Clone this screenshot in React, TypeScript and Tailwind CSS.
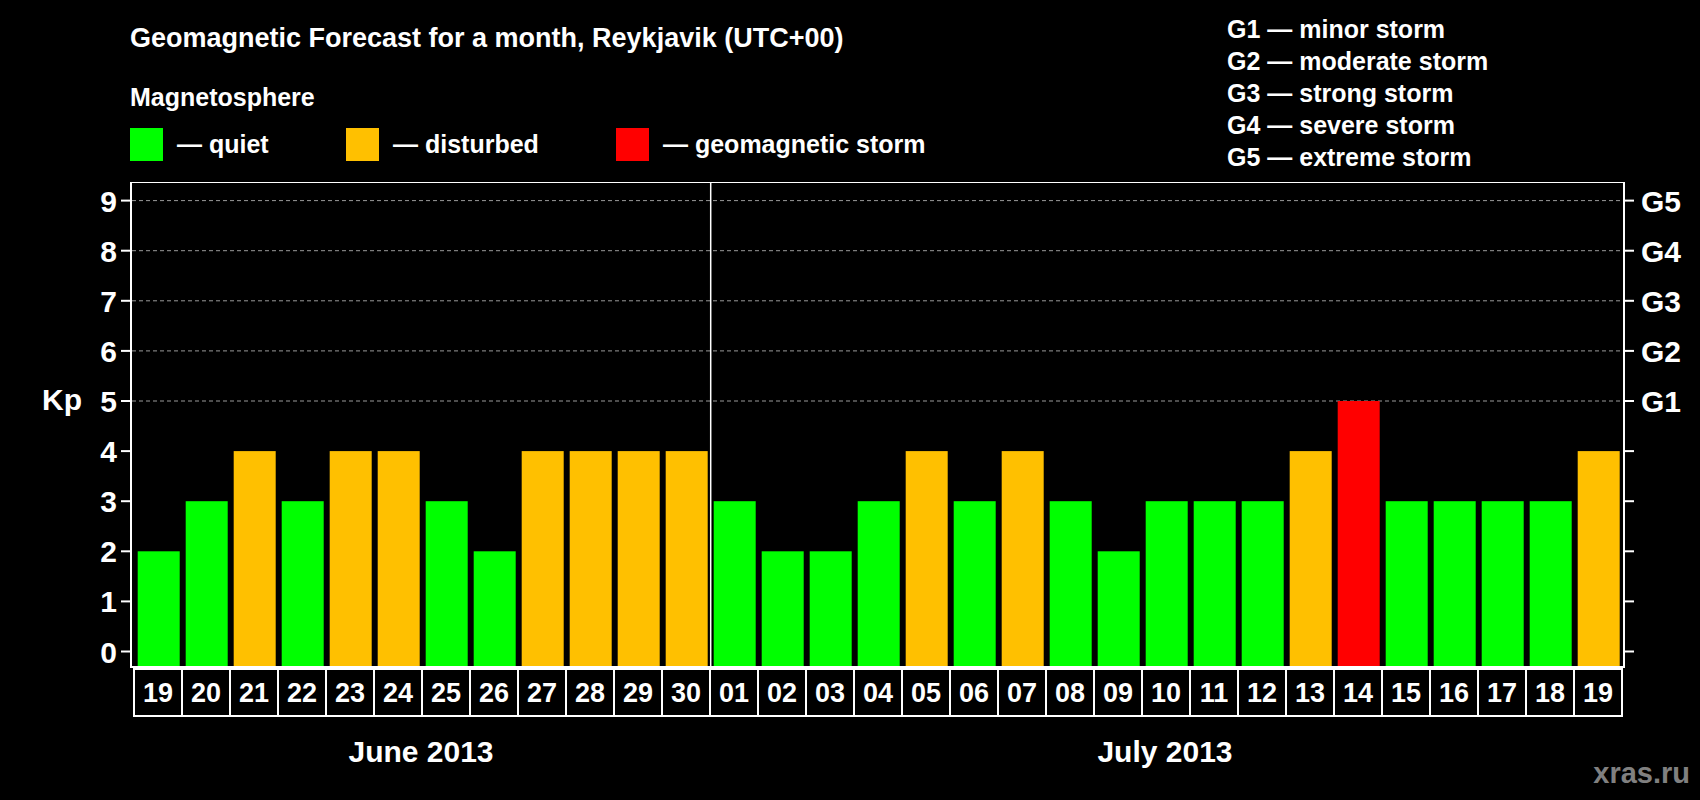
const june = [2, 3, 4, 3, 4, 4, 3, 2, 4, 4, 4, 4];
const july = [3, 2, 2, 3, 4, 3, 4, 3, 2, 3, 3, 3, 4, 5, 3, 3, 3, 3, 4];

const days = [
  ...june.map((kp, i) => ({ label: String(19 + i), kp })),
  ...july.map((kp, i) => ({ label: String(i + 1).padStart(2, '0'), kp })),
];

const G_LEVELS = [
  'G1 — minor storm',
  'G2 — moderate storm',
  'G3 — strong storm',
  'G4 — severe storm',
  'G5 — extreme storm',
];

function barColor(kp: number) {
  if (kp >= 5) return '#ff0000';
  if (kp === 4) return '#ffc000';
  return '#00ff00';
}

const Y0 = 651.5;
const UNIT = 50.1;
const X0 = 137.7;
const SLOT = 48;

function Chart() {
  return (
    <svg width={1700} height={618} viewBox="0 182 1700 618" className="block" fontFamily="'Liberation Sans', Arial, sans-serif" fontWeight="bold">
      {/* grid lines */}
      {[5, 6, 7, 8, 9].map((k) => (
        <line key={k} x1={132} x2={1623} y1={Y0 - k * UNIT} y2={Y0 - k * UNIT} stroke="#9a9a9a" strokeWidth={1} strokeDasharray="4 3" />
      ))}
      {/* bars */}
      {days.map((d, i) => (
        <rect key={i} x={X0 + i * SLOT} y={Y0 - d.kp * UNIT} width={42} height={667 - (Y0 - d.kp * UNIT)} fill={barColor(d.kp)} />
      ))}
      {/* frame */}
      <rect x={131} y={182} width={1493} height={485} fill="none" stroke="#fff" strokeWidth={2} />
      <line x1={710.7} x2={710.7} y1={182} y2={667} stroke="#fff" strokeWidth={1.5} />
      {/* ticks & y labels */}
      {Array.from({ length: 10 }, (_, k) => (
        <g key={k}>
          <line x1={121} x2={131} y1={Y0 - k * UNIT} y2={Y0 - k * UNIT} stroke="#fff" strokeWidth={2} />
          <line x1={1624} x2={1634} y1={Y0 - k * UNIT} y2={Y0 - k * UNIT} stroke="#fff" strokeWidth={2} />
          <text x={117} y={Y0 - k * UNIT + 11} fill="#fff" fontSize={30} textAnchor="end">{k}</text>
        </g>
      ))}
      {[1, 2, 3, 4, 5].map((g) => (
        <text key={g} x={1641} y={Y0 - (g + 4) * UNIT + 11} fill="#fff" fontSize={30}>G{g}</text>
      ))}
      <text x={42} y={410} fill="#fff" fontSize={30}>Kp</text>
      {/* day labels */}
      <rect x={134} y={669} width={1488} height={47} fill="none" stroke="#fff" strokeWidth={2} />
      {days.map((d, i) => (
        <g key={i}>
          {i > 0 && <line x1={134 + i * SLOT} x2={134 + i * SLOT} y1={669} y2={716} stroke="#fff" strokeWidth={2} />}
          <text x={134 + i * SLOT + 24} y={702} fill="#fff" fontSize={27} textAnchor="middle">{d.label}</text>
        </g>
      ))}
      <text x={421} y={762} fill="#fff" fontSize={30} textAnchor="middle">June 2013</text>
      <text x={1165} y={762} fill="#fff" fontSize={30} textAnchor="middle">July 2013</text>
      <text x={1690} y={783} fill="#808080" fontSize={29} textAnchor="end">xras.ru</text>
    </svg>
  );
}

function LegendItem({ color, label }: { color: string; label: string }) {
  return (
    <div className="flex items-center gap-[14px]">
      <span className="h-[33px] w-[33px]" style={{ backgroundColor: color }} />
      <span className="text-[25px] leading-none">{label}</span>
    </div>
  );
}

export default function App() {
  return (
    <div className="h-[800px] w-[1700px] overflow-hidden bg-black font-[Liberation_Sans,Arial,sans-serif] font-bold text-white">
      <div className="flex h-[182px]">
        <div className="w-[1227px] pl-[130px] pt-[22px]">
          <h1 className="text-[27px] leading-[32px]">Geomagnetic Forecast for a month, Reykjavik (UTC+00)</h1>
          <div className="mt-[28px] text-[25px] leading-[30px]">Magnetosphere</div>
          <div className="mt-[16px] flex">
            <div className="w-[216px]"><LegendItem color="#00ff00" label="— quiet" /></div>
            <div className="w-[270px]"><LegendItem color="#ffc000" label="— disturbed" /></div>
            <LegendItem color="#ff0000" label="— geomagnetic storm" />
          </div>
        </div>
        <div className="flex flex-col pt-[13px] text-[25px] leading-[32px]">
          {G_LEVELS.map((g) => (
            <div key={g}>{g}</div>
          ))}
        </div>
      </div>
      <Chart />
    </div>
  );
}
